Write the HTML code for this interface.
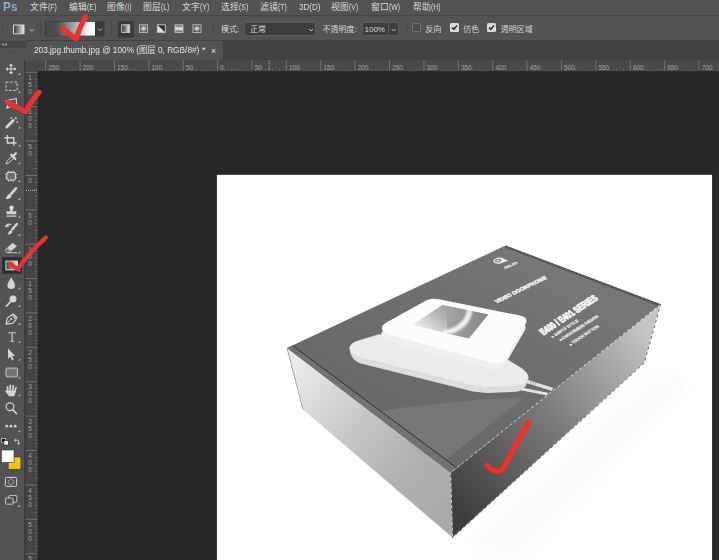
<!DOCTYPE html>
<html lang="zh">
<head>
<meta charset="utf-8">
<title>Photoshop</title>
<style>
html,body{margin:0;padding:0;}
body{width:719px;height:560px;overflow:hidden;background:#282828;position:relative;
 font-family:"Liberation Sans","Noto Sans CJK SC",sans-serif;font-size:9px;color:#dadada;}
.abs{position:absolute;}
#menubar{left:0;top:0;width:719px;height:16px;background:#535353;}
#menubar span{position:absolute;top:0px;line-height:14px;white-space:nowrap;font-size:8.8px;letter-spacing:0.3px;color:#dadada;transform-origin:0 50%;}
#menubar span i{font-style:normal;font-size:8.2px;letter-spacing:0;display:inline-block;transform:scaleX(0.84);transform-origin:0 50%;}
#ps{left:3px;top:-2.2px !important;font-size:13.2px !important;font-weight:bold;color:#86addc !important;letter-spacing:0.2px;line-height:18px !important;transform:scaleX(0.88);}
#optbar{left:0;top:15px;width:719px;height:25px;background:#535353;border-top:1px solid #464646;box-sizing:border-box;}
#optbar .t{position:absolute;top:6.5px;line-height:14px;white-space:nowrap;font-size:8px;color:#d6d6d6;}
#optbar .sep{position:absolute;top:5px;width:1px;height:15px;background:#444;}
#optbar .box{position:absolute;top:5.5px;height:14px;background:#3d3d3d;border:1px solid #5c5c5c;box-sizing:border-box;border-radius:1px;}
#optbar .cb{position:absolute;top:7.2px;width:9px;height:9px;box-sizing:border-box;border-radius:1.5px;}
#tabbar{left:0;top:40px;width:719px;height:21px;background:#424242;}
#tab{left:26px;top:41px;width:197px;height:19px;background:#535353;}
#tabt{transform:scaleX(0.92);}
#tab span{position:absolute;left:7.6px;top:2px;line-height:14px;font-size:9px;color:#e6e6e6;white-space:nowrap;transform-origin:0 50%;}
#tools{left:0;top:40px;width:24.2px;height:520px;background:#535353;}
#toolhead{left:0;top:40.6px;width:25.7px;height:7px;background:#464646;}
#canvas{left:38px;top:71px;width:681px;height:489px;background:#272727;}
svg{position:absolute;left:0;top:0;overflow:visible;}
svg text{font-family:"Liberation Sans","Noto Sans CJK SC",sans-serif;}
</style>
</head>
<body>
<div id="canvas" class="abs"></div>
<svg width="719" height="560" viewBox="0 0 719 560">
<defs>
<linearGradient id="top" gradientUnits="userSpaceOnUse" x1="450" y1="470" x2="560" y2="270"><stop offset="0" stop-color="#686868"/><stop offset="0.5" stop-color="#6d6d6d"/><stop offset="1" stop-color="#777777"/></linearGradient>
<linearGradient id="lf" gradientUnits="userSpaceOnUse" x1="292" y1="375" x2="452" y2="505"><stop offset="0" stop-color="#e9e9e9"/><stop offset="0.42" stop-color="#c5c5c5"/><stop offset="0.7" stop-color="#b1b1b1"/><stop offset="1" stop-color="#aaaaaa"/></linearGradient>
<linearGradient id="rf" gradientUnits="userSpaceOnUse" x1="455" y1="505" x2="655" y2="338.6"><stop offset="0" stop-color="#3f3e3d"/><stop offset="0.5" stop-color="#7c7a7b"/><stop offset="1" stop-color="#c5c5c5"/></linearGradient>
<linearGradient id="scr" gradientUnits="userSpaceOnUse" x1="452" y1="306" x2="428" y2="334"><stop offset="0" stop-color="#9a9a9a"/><stop offset="0.5" stop-color="#bcbcbc"/><stop offset="1" stop-color="#ececec"/></linearGradient>
<linearGradient id="scr2" gradientUnits="userSpaceOnUse" x1="447" y1="320" x2="486" y2="322"><stop offset="0" stop-color="#a4a4a4"/><stop offset="1" stop-color="#868686"/></linearGradient>
<filter id="b2" x="-30%" y="-30%" width="160%" height="160%"><feGaussianBlur stdDeviation="1.3"/></filter>
<filter id="bl" x="-20%" y="-20%" width="140%" height="140%"><feGaussianBlur stdDeviation="9"/></filter>
<filter id="b1"><feGaussianBlur stdDeviation="0.5"/></filter>
</defs>
<rect x="216.4" y="174.3" width="496.2" height="400" fill="#1e1e1e"/>
<rect x="216.9" y="174.8" width="495.2" height="400" fill="#ffffff"/>
<polygon points="470.0,545.0 655.0,375.0 690.0,380.0 520.0,556.0" fill="#fafafa" filter="url(#bl)"/>
<polygon points="287.0,348.0 450.6,472.8 452.6,537.6 303.0,409.5" fill="url(#lf)"/>
<polygon points="450.6,472.8 660.7,304.3 644.2,363.0 452.6,537.6" fill="url(#rf)"/>
<polygon points="287.0,348.0 505.4,245.6 660.7,304.3 450.6,472.8" fill="url(#top)"/>
<path d="M381 411.4 C392 409.4 398 408 404 407.4 L480 399.4 L523.7 397.5 L446.1 459.8 Z" fill="#777777" filter="url(#b1)"/>
<polygon points="287.0,348.0 292.4,345.5 456.8,467.8 450.6,472.8" fill="#727272"/>
<path d="M292.4 345.5 L456.8 467.8" stroke="#262626" stroke-width="0.9"/>
<path d="M287 348 L303 409.5" stroke="#a8a8a8" stroke-width="1"/>
<path d="M505.4 246.6 L659.7 305.1" stroke="#585858" stroke-width="2.2"/>
<g filter="url(#b1)">
<path d="M349.7 349 C350 344.6 353.6 342.4 357 341.2 L379 334.5 L507 359.5 L521 368 C527 372 529.4 377 527.6 381.4 C526 387 522 391 516 391.8 L487 393 L473 391.5 L362 363.8 C355 362 350.4 357 349.7 349 Z" fill="#dedede"/>
<path d="M349.7 348 C350 344.6 353.6 342.4 357 341.2 L379 334.5 L507 359.5 L521 368 C527 372 529.4 376 527.8 379.6 C526 384.4 521 386.4 515 386.6 L487 387.6 L474 386 L364 358.6 C356 356.6 350.4 354 349.7 348 Z" fill="#ebebeb" stroke="#d2d2d2" stroke-width="0.5"/>
<path d="M480 388 L481.6 392.6" stroke="#c8c8c8" stroke-width="0.8"/>
<path transform="translate(-0.9,6.6)" d="M382 329 C381.5 326.5 383 324.5 386 322.8 L426 300.6 C430 298.6 434 298.2 439 299.2 L520 315.6 C526 317 528 320 525.6 324 L505.6 358.6 C502.6 363.4 498.6 364.6 492 362.8 L388.6 334.6 C384.6 333.4 382.6 331.4 382 329 Z" fill="#efefef"/>
<path d="M382 329 C381.5 326.5 383 324.5 386 322.8 L426 300.6 C430 298.6 434 298.2 439 299.2 L520 315.6 C526 317 528 320 525.6 324 L505.6 358.6 C502.6 363.4 498.6 364.6 492 362.8 L388.6 334.6 C384.6 333.4 382.6 331.4 382 329 Z" fill="#fcfcfc"/>
<polygon points="411.9,325.1 442.5,305.1 488.1,314.4 468.9,338.2" fill="url(#scr)"/>
<polygon points="447,306 488.1,314.4 468.9,338.2 447,333.6" fill="url(#scr2)"/>
<clipPath id="scrc"><polygon points="411.9,325.1 442.5,305.1 488.1,314.4 468.9,338.2"/></clipPath>
<g clip-path="url(#scrc)"><path d="M469.4 309 C470 317 464 325 455 329.6 C451 331.6 447 332.6 443 333" fill="none" stroke="#ffffff" stroke-width="5.5" opacity="0.85" filter="url(#b2)"/></g>
</g>
<path d="M526 381.2 L552.6 389.3" stroke="#e2e2e2" stroke-width="3.5"/><path d="M531.4 381 l-1 3.4 M533.6 381.8 l-1 3.4 M535.8 382.4 l-1 3.4" stroke="#a4a4a4" stroke-width="0.8"/>
<path d="M521 388.8 L547.6 394.2" stroke="#e6e6e6" stroke-width="2.8"/>
<g transform="translate(498.6,260.6) rotate(-8)"><path d="M-5.4 0 A5.4 3.1 0 0 1 3.4 -2.4 L9.6 1.6 L2.6 2.7 A5.4 3.1 0 0 1 -5.4 0 Z" fill="#ececec"/><ellipse cx="-0.6" cy="0" rx="3.3" ry="1.8" fill="#8a8a8a"/><ellipse cx="-0.6" cy="0" rx="1.5" ry="0.8" fill="#dcdcdc"/></g>
<text transform="translate(505,269.1) rotate(-22.6) skewX(12)" font-size="3.4" font-weight="bold" fill="#e8e8e8" stroke="#e8e8e8" stroke-width="0.2" textLength="14.3" lengthAdjust="spacingAndGlyphs">SKJD</text>
<text transform="translate(496.4,303.6) rotate(-26.2) skewX(14)" font-size="5.3" font-weight="bold" fill="#f2f2f2" stroke="#f2f2f2" stroke-width="0.45" textLength="56.5" lengthAdjust="spacingAndGlyphs">VIDEO DOORPHONE</text>
<text transform="translate(543.5,335.2) rotate(-33.2) skewX(15)" font-size="9.6" font-weight="bold" fill="#f4f4f4" stroke="#f4f4f4" stroke-width="0.95" textLength="65.8" lengthAdjust="spacingAndGlyphs">E400 / E401 SERIES</text>
<text transform="translate(553.3,337.8) rotate(-32.9) skewX(15)" font-size="4.2" font-weight="bold" fill="#f0f0f0" stroke="#f0f0f0" stroke-width="0.2" textLength="30.4" lengthAdjust="spacingAndGlyphs">▸ SIMPLY STYLE</text>
<text transform="translate(560.8,341.3) rotate(-32.7) skewX(15)" font-size="4.2" font-weight="bold" fill="#f0f0f0" stroke="#f0f0f0" stroke-width="0.2" textLength="45.2" lengthAdjust="spacingAndGlyphs">▸ CHOICENESS DESIGN</text>
<text transform="translate(570.5,345.7) rotate(-33.1) skewX(15)" font-size="4.2" font-weight="bold" fill="#f0f0f0" stroke="#f0f0f0" stroke-width="0.2" textLength="34.4" lengthAdjust="spacingAndGlyphs">▸ TOUCH BUTTON</text>
<path d="M450.6 472.8 L660.7 304.3 L644.2 363 L452.6 537.6 Z" fill="none" stroke="#f4f4f4" stroke-width="0.8" opacity="0.9"/>
<path d="M450.6 472.8 L660.7 304.3 L644.2 363 L452.6 537.6 Z" fill="none" stroke="#2a2a2a" stroke-width="0.8" stroke-dasharray="2.8 2.8" opacity="0.85"/>
</svg>
<div id="menubar" class="abs">
<span id="ps">Ps</span>
<span style="left:30px">文件<i>(F)</i></span>
<span style="left:69px">编辑<i>(E)</i></span>
<span style="left:107px">图像<i>(I)</i></span>
<span style="left:143px">图层<i>(L)</i></span>
<span style="left:182px">文字<i>(Y)</i></span>
<span style="left:221px">选择<i>(S)</i></span>
<span style="left:260px">滤镜<i>(T)</i></span>
<span style="left:299px"><i style="font-size:9.6px">3D(D)</i></span>
<span style="left:331px">视图<i>(V)</i></span>
<span style="left:371px">窗口<i>(W)</i></span>
<span style="left:413px">帮助<i>(H)</i></span>
</div>
<div id="optbar" class="abs">
<svg width="719" height="25" viewBox="0 15 719 25"><rect x="2" y="22" width="1" height="1" fill="#414141"/><rect x="2" y="24" width="1" height="1" fill="#414141"/><rect x="2" y="26" width="1" height="1" fill="#414141"/><rect x="2" y="28" width="1" height="1" fill="#414141"/><rect x="2" y="30" width="1" height="1" fill="#414141"/><rect x="2" y="32" width="1" height="1" fill="#414141"/><rect x="2" y="34" width="1" height="1" fill="#414141"/><defs><linearGradient id="g1" x1="0" x2="1" y1="0" y2="0"><stop offset="0" stop-color="#2e2e2e"/><stop offset="1" stop-color="#e8e8e8"/></linearGradient><linearGradient id="g2" x1="0" x2="1" y1="0" y2="0"><stop offset="0" stop-color="#4a4a4a"/><stop offset="0.25" stop-color="#505050"/><stop offset="0.85" stop-color="#f4f4f4"/><stop offset="1" stop-color="#ffffff"/></linearGradient><radialGradient id="g3"><stop offset="0" stop-color="#f0f0f0"/><stop offset="1" stop-color="#505050"/></radialGradient><linearGradient id="g4" x1="0" x2="0" y1="0" y2="1"><stop offset="0" stop-color="#555"/><stop offset="0.5" stop-color="#f0f0f0"/><stop offset="1" stop-color="#555"/></linearGradient></defs><rect x="13.5" y="24" width="10.5" height="8.8" fill="url(#g1)" stroke="#d8d8d8" stroke-width="1"/><path d="M30 28.2 L32 30.2 L34 28.2" fill="none" stroke="#bdbdbd" stroke-width="1"/><rect x="40" y="20" width="1" height="15" fill="#484848"/><rect x="45" y="20.2" width="59.5" height="15" fill="#3a3a3a" rx="1"/><rect x="46" y="20.9" width="49" height="13.7" fill="url(#g2)"/><path d="M98 27.6 L100 29.6 L102 27.6" fill="none" stroke="#c8c8c8" stroke-width="1"/><rect x="111" y="20" width="1" height="15" fill="#484848"/><rect x="118" y="20" width="16" height="16.5" fill="#3a3a3a" rx="1"/><rect x="121.7" y="23.8" width="8" height="7.6" fill="url(#g1)" stroke="#cccccc" stroke-width="0.9"/><rect x="139.5" y="23.8" width="8" height="7.6" fill="url(#g3)" stroke="#c4c4c4" stroke-width="0.9"/><rect x="157.3" y="23.8" width="8" height="7.6" fill="#dedede"/><path d="M157.3 23.8 L165.3 23.8 L165.3 31.4 Z" fill="#2c2c2c"/><rect x="157.3" y="23.8" width="8" height="7.6" fill="none" stroke="#c4c4c4" stroke-width="0.9"/><rect x="175" y="23.8" width="8" height="7.6" fill="url(#g4)" stroke="#c4c4c4" stroke-width="0.9"/><rect x="193" y="23.8" width="8" height="7.6" fill="#4a4a4a"/><path d="M197 23.8 L201 27.6 L197 31.4 L193 27.6 Z" fill="url(#g3)"/><rect x="193" y="23.8" width="8" height="7.6" fill="none" stroke="#c4c4c4" stroke-width="0.9"/><rect x="213" y="20" width="1" height="15" fill="#484848"/><rect x="406" y="20" width="1" height="15" fill="#484848"/></svg>
<span class="t" style="left:221px">模式:</span>
<div class="box" style="left:244px;width:72px"></div>
<span class="t" style="left:250px">正常</span>
<span class="t" style="left:322.5px">不透明度:</span>
<div class="box" style="left:362px;width:27px"></div>
<div class="box" style="left:388px;width:11px"></div>
<span class="t" style="left:364.5px">100%</span>
<svg width="719" height="25" viewBox="0 15 719 25"><path d="M309 28 L311 30 L313 28" fill="none" stroke="#c0c0c0" stroke-width="1"/><path d="M391.5 28 L393.5 30 L395.5 28" fill="none" stroke="#c0c0c0" stroke-width="1"/></svg>
<div class="cb" style="left:412px;background:#4a4a4a;border:1px solid #727272"></div>
<span class="t" style="left:425.5px">反向</span>
<div class="cb" style="left:449.5px;background:#dcdcdc"><svg width="9" height="9" viewBox="0 0 9 9" style="left:0;top:0"><path d="M2 4.4 L3.8 6.3 L7 2.4" fill="none" stroke="#2a2a2a" stroke-width="1.5"/></svg></div>
<span class="t" style="left:463.3px">仿色</span>
<div class="cb" style="left:487.3px;background:#dcdcdc"><svg width="9" height="9" viewBox="0 0 9 9" style="left:0;top:0"><path d="M2 4.4 L3.8 6.3 L7 2.4" fill="none" stroke="#2a2a2a" stroke-width="1.5"/></svg></div>
<span class="t" style="left:500.8px">透明区域</span>
</div>
<div id="tabbar" class="abs"></div>
<div id="tab" class="abs"><span id="tabt">203.jpg.thumb.jpg @ 100% (图层 0, RGB/8#)</span><span style="left:176px">*</span><span style="left:185px;font-size:8.6px;top:2.6px">×</span></div>
<svg width="719" height="560" viewBox="0 0 719 560">
<rect x="26" y="60" width="693" height="11" fill="#494949"/>
<rect x="24" y="60" width="2" height="500" fill="#3d3d3d"/>
<rect x="25.7" y="71" width="12" height="489" fill="#454545"/>
<path d="M38.80 68.4V71 M42.24 69.6V71 M49.11 69.6V71 M52.55 68.4V71 M55.99 69.6V71 M59.43 68.4V71 M62.87 69.6V71 M66.31 68.4V71 M69.74 69.6V71 M73.18 68.4V71 M76.62 69.6V71 M83.50 69.6V71 M86.94 68.4V71 M90.38 69.6V71 M93.81 68.4V71 M97.25 69.6V71 M100.69 68.4V71 M104.13 69.6V71 M107.57 68.4V71 M111.01 69.6V71 M117.88 69.6V71 M121.32 68.4V71 M124.76 69.6V71 M128.20 68.4V71 M131.64 69.6V71 M135.08 68.4V71 M138.51 69.6V71 M141.95 68.4V71 M145.39 69.6V71 M152.27 69.6V71 M155.71 68.4V71 M159.15 69.6V71 M162.58 68.4V71 M166.02 69.6V71 M169.46 68.4V71 M172.90 69.6V71 M176.34 68.4V71 M179.78 69.6V71 M186.65 69.6V71 M190.09 68.4V71 M193.53 69.6V71 M196.97 68.4V71 M200.41 69.6V71 M203.85 68.4V71 M207.28 69.6V71 M210.72 68.4V71 M214.16 69.6V71 M221.04 69.6V71 M224.48 68.4V71 M227.92 69.6V71 M231.35 68.4V71 M234.79 69.6V71 M238.23 68.4V71 M241.67 69.6V71 M245.11 68.4V71 M248.55 69.6V71 M255.42 69.6V71 M258.86 68.4V71 M262.30 69.6V71 M265.74 68.4V71 M269.18 69.6V71 M272.62 68.4V71 M276.05 69.6V71 M279.49 68.4V71 M282.93 69.6V71 M289.81 69.6V71 M293.25 68.4V71 M296.69 69.6V71 M300.12 68.4V71 M303.56 69.6V71 M307.00 68.4V71 M310.44 69.6V71 M313.88 68.4V71 M317.32 69.6V71 M324.19 69.6V71 M327.63 68.4V71 M331.07 69.6V71 M334.51 68.4V71 M337.95 69.6V71 M341.39 68.4V71 M344.82 69.6V71 M348.26 68.4V71 M351.70 69.6V71 M358.58 69.6V71 M362.02 68.4V71 M365.46 69.6V71 M368.89 68.4V71 M372.33 69.6V71 M375.77 68.4V71 M379.21 69.6V71 M382.65 68.4V71 M386.09 69.6V71 M392.96 69.6V71 M396.40 68.4V71 M399.84 69.6V71 M403.28 68.4V71 M406.72 69.6V71 M410.16 68.4V71 M413.59 69.6V71 M417.03 68.4V71 M420.47 69.6V71 M427.35 69.6V71 M430.79 68.4V71 M434.23 69.6V71 M437.66 68.4V71 M441.10 69.6V71 M444.54 68.4V71 M447.98 69.6V71 M451.42 68.4V71 M454.86 69.6V71 M461.73 69.6V71 M465.17 68.4V71 M468.61 69.6V71 M472.05 68.4V71 M475.49 69.6V71 M478.93 68.4V71 M482.36 69.6V71 M485.80 68.4V71 M489.24 69.6V71 M496.12 69.6V71 M499.56 68.4V71 M503.00 69.6V71 M506.43 68.4V71 M509.87 69.6V71 M513.31 68.4V71 M516.75 69.6V71 M520.19 68.4V71 M523.63 69.6V71 M530.50 69.6V71 M533.94 68.4V71 M537.38 69.6V71 M540.82 68.4V71 M544.26 69.6V71 M547.70 68.4V71 M551.13 69.6V71 M554.57 68.4V71 M558.01 69.6V71 M564.89 69.6V71 M568.33 68.4V71 M571.77 69.6V71 M575.20 68.4V71 M578.64 69.6V71 M582.08 68.4V71 M585.52 69.6V71 M588.96 68.4V71 M592.40 69.6V71 M599.27 69.6V71 M602.71 68.4V71 M606.15 69.6V71 M609.59 68.4V71 M613.03 69.6V71 M616.47 68.4V71 M619.90 69.6V71 M623.34 68.4V71 M626.78 69.6V71 M633.66 69.6V71 M637.10 68.4V71 M640.54 69.6V71 M643.97 68.4V71 M647.41 69.6V71 M650.85 68.4V71 M654.29 69.6V71 M657.73 68.4V71 M661.17 69.6V71 M668.04 69.6V71 M671.48 68.4V71 M674.92 69.6V71 M678.36 68.4V71 M681.80 69.6V71 M685.24 68.4V71 M688.67 69.6V71 M692.11 68.4V71 M695.55 69.6V71 M702.43 69.6V71 M705.87 68.4V71 M709.31 69.6V71 M712.74 68.4V71 M716.18 69.6V71" stroke="#6c6c6c" stroke-width="0.8" fill="none"/>
<path d="M45.68 60.5V71 M80.06 60.5V71 M114.44 60.5V71 M148.83 60.5V71 M183.22 60.5V71 M217.60 60.5V71 M251.98 60.5V71 M286.37 60.5V71 M320.75 60.5V71 M355.14 60.5V71 M389.52 60.5V71 M423.91 60.5V71 M458.29 60.5V71 M492.68 60.5V71 M527.06 60.5V71 M561.45 60.5V71 M595.84 60.5V71 M630.22 60.5V71 M664.61 60.5V71 M698.99 60.5V71" stroke="#7e7e7e" stroke-width="0.8" fill="none"/>
<text x="48.4" y="69.7" font-size="7.6" fill="#a6a6a6" textLength="10.6" lengthAdjust="spacingAndGlyphs">250</text>
<text x="82.8" y="69.7" font-size="7.6" fill="#a6a6a6" textLength="10.6" lengthAdjust="spacingAndGlyphs">200</text>
<text x="117.1" y="69.7" font-size="7.6" fill="#a6a6a6" textLength="10.6" lengthAdjust="spacingAndGlyphs">150</text>
<text x="151.5" y="69.7" font-size="7.6" fill="#a6a6a6" textLength="10.6" lengthAdjust="spacingAndGlyphs">100</text>
<text x="185.9" y="69.7" font-size="7.6" fill="#a6a6a6" textLength="7.1" lengthAdjust="spacingAndGlyphs">50</text>
<text x="220.3" y="69.7" font-size="7.6" fill="#a6a6a6" textLength="3.5" lengthAdjust="spacingAndGlyphs">0</text>
<text x="254.7" y="69.7" font-size="7.6" fill="#a6a6a6" textLength="7.1" lengthAdjust="spacingAndGlyphs">50</text>
<text x="289.1" y="69.7" font-size="7.6" fill="#a6a6a6" textLength="10.6" lengthAdjust="spacingAndGlyphs">100</text>
<text x="323.5" y="69.7" font-size="7.6" fill="#a6a6a6" textLength="10.6" lengthAdjust="spacingAndGlyphs">150</text>
<text x="357.8" y="69.7" font-size="7.6" fill="#a6a6a6" textLength="10.6" lengthAdjust="spacingAndGlyphs">200</text>
<text x="392.2" y="69.7" font-size="7.6" fill="#a6a6a6" textLength="10.6" lengthAdjust="spacingAndGlyphs">250</text>
<text x="426.6" y="69.7" font-size="7.6" fill="#a6a6a6" textLength="10.6" lengthAdjust="spacingAndGlyphs">300</text>
<text x="461.0" y="69.7" font-size="7.6" fill="#a6a6a6" textLength="10.6" lengthAdjust="spacingAndGlyphs">350</text>
<text x="495.4" y="69.7" font-size="7.6" fill="#a6a6a6" textLength="10.6" lengthAdjust="spacingAndGlyphs">400</text>
<text x="529.8" y="69.7" font-size="7.6" fill="#a6a6a6" textLength="10.6" lengthAdjust="spacingAndGlyphs">450</text>
<text x="564.1" y="69.7" font-size="7.6" fill="#a6a6a6" textLength="10.6" lengthAdjust="spacingAndGlyphs">500</text>
<text x="598.5" y="69.7" font-size="7.6" fill="#a6a6a6" textLength="10.6" lengthAdjust="spacingAndGlyphs">550</text>
<text x="632.9" y="69.7" font-size="7.6" fill="#a6a6a6" textLength="10.6" lengthAdjust="spacingAndGlyphs">600</text>
<text x="667.3" y="69.7" font-size="7.6" fill="#a6a6a6" textLength="10.6" lengthAdjust="spacingAndGlyphs">650</text>
<text x="701.7" y="69.7" font-size="7.6" fill="#a6a6a6" textLength="10.6" lengthAdjust="spacingAndGlyphs">700</text>
<path d="M35.8 75.68H37.6 M34 79.12H37.6 M35.8 82.56H37.6 M34 86.00H37.6 M35.8 89.44H37.6 M34 92.88H37.6 M35.8 96.31H37.6 M34 99.75H37.6 M35.8 103.19H37.6 M35.8 110.07H37.6 M34 113.51H37.6 M35.8 116.95H37.6 M34 120.38H37.6 M35.8 123.82H37.6 M34 127.26H37.6 M35.8 130.70H37.6 M34 134.14H37.6 M35.8 137.58H37.6 M35.8 144.45H37.6 M34 147.89H37.6 M35.8 151.33H37.6 M34 154.77H37.6 M35.8 158.21H37.6 M34 161.65H37.6 M35.8 165.08H37.6 M34 168.52H37.6 M35.8 171.96H37.6 M35.8 178.84H37.6 M34 182.28H37.6 M35.8 185.72H37.6 M34 189.15H37.6 M35.8 192.59H37.6 M34 196.03H37.6 M35.8 199.47H37.6 M34 202.91H37.6 M35.8 206.35H37.6 M35.8 213.22H37.6 M34 216.66H37.6 M35.8 220.10H37.6 M34 223.54H37.6 M35.8 226.98H37.6 M34 230.42H37.6 M35.8 233.85H37.6 M34 237.29H37.6 M35.8 240.73H37.6 M35.8 247.61H37.6 M34 251.05H37.6 M35.8 254.49H37.6 M34 257.92H37.6 M35.8 261.36H37.6 M34 264.80H37.6 M35.8 268.24H37.6 M34 271.68H37.6 M35.8 275.12H37.6 M35.8 281.99H37.6 M34 285.43H37.6 M35.8 288.87H37.6 M34 292.31H37.6 M35.8 295.75H37.6 M34 299.19H37.6 M35.8 302.62H37.6 M34 306.06H37.6 M35.8 309.50H37.6 M35.8 316.38H37.6 M34 319.82H37.6 M35.8 323.26H37.6 M34 326.69H37.6 M35.8 330.13H37.6 M34 333.57H37.6 M35.8 337.01H37.6 M34 340.45H37.6 M35.8 343.89H37.6 M35.8 350.76H37.6 M34 354.20H37.6 M35.8 357.64H37.6 M34 361.08H37.6 M35.8 364.52H37.6 M34 367.96H37.6 M35.8 371.39H37.6 M34 374.83H37.6 M35.8 378.27H37.6 M35.8 385.15H37.6 M34 388.59H37.6 M35.8 392.03H37.6 M34 395.46H37.6 M35.8 398.90H37.6 M34 402.34H37.6 M35.8 405.78H37.6 M34 409.22H37.6 M35.8 412.66H37.6 M35.8 419.53H37.6 M34 422.97H37.6 M35.8 426.41H37.6 M34 429.85H37.6 M35.8 433.29H37.6 M34 436.73H37.6 M35.8 440.16H37.6 M34 443.60H37.6 M35.8 447.04H37.6 M35.8 453.92H37.6 M34 457.36H37.6 M35.8 460.80H37.6 M34 464.23H37.6 M35.8 467.67H37.6 M34 471.11H37.6 M35.8 474.55H37.6 M34 477.99H37.6 M35.8 481.43H37.6 M35.8 488.30H37.6 M34 491.74H37.6 M35.8 495.18H37.6 M34 498.62H37.6 M35.8 502.06H37.6 M34 505.50H37.6 M35.8 508.93H37.6 M34 512.37H37.6 M35.8 515.81H37.6 M35.8 522.69H37.6 M34 526.13H37.6 M35.8 529.57H37.6 M34 533.00H37.6 M35.8 536.44H37.6 M34 539.88H37.6 M35.8 543.32H37.6 M34 546.76H37.6 M35.8 550.20H37.6 M35.8 557.07H37.6" stroke="#6c6c6c" stroke-width="0.8" fill="none"/>
<path d="M25.7 72.25H37.6 M25.7 106.63H37.6 M25.7 141.02H37.6 M25.7 175.40H37.6 M25.7 209.78H37.6 M25.7 244.17H37.6 M25.7 278.56H37.6 M25.7 312.94H37.6 M25.7 347.32H37.6 M25.7 381.71H37.6 M25.7 416.10H37.6 M25.7 450.48H37.6 M25.7 484.87H37.6 M25.7 519.25H37.6 M25.7 553.63H37.6" stroke="#7e7e7e" stroke-width="0.8" fill="none"/>
<text x="28.2" y="79.9" font-size="7.7" fill="#a6a6a6" textLength="3.5" lengthAdjust="spacingAndGlyphs">1</text>
<text x="28.2" y="86.9" font-size="7.7" fill="#a6a6a6" textLength="3.5" lengthAdjust="spacingAndGlyphs">5</text>
<text x="28.2" y="93.9" font-size="7.7" fill="#a6a6a6" textLength="3.5" lengthAdjust="spacingAndGlyphs">0</text>
<text x="28.2" y="114.3" font-size="7.7" fill="#a6a6a6" textLength="3.5" lengthAdjust="spacingAndGlyphs">1</text>
<text x="28.2" y="121.3" font-size="7.7" fill="#a6a6a6" textLength="3.5" lengthAdjust="spacingAndGlyphs">0</text>
<text x="28.2" y="128.3" font-size="7.7" fill="#a6a6a6" textLength="3.5" lengthAdjust="spacingAndGlyphs">0</text>
<text x="28.2" y="148.7" font-size="7.7" fill="#a6a6a6" textLength="3.5" lengthAdjust="spacingAndGlyphs">5</text>
<text x="28.2" y="155.7" font-size="7.7" fill="#a6a6a6" textLength="3.5" lengthAdjust="spacingAndGlyphs">0</text>
<text x="28.2" y="183.1" font-size="7.7" fill="#a6a6a6" textLength="3.5" lengthAdjust="spacingAndGlyphs">0</text>
<text x="28.2" y="217.5" font-size="7.7" fill="#a6a6a6" textLength="3.5" lengthAdjust="spacingAndGlyphs">5</text>
<text x="28.2" y="224.5" font-size="7.7" fill="#a6a6a6" textLength="3.5" lengthAdjust="spacingAndGlyphs">0</text>
<text x="28.2" y="251.9" font-size="7.7" fill="#a6a6a6" textLength="3.5" lengthAdjust="spacingAndGlyphs">1</text>
<text x="28.2" y="258.9" font-size="7.7" fill="#a6a6a6" textLength="3.5" lengthAdjust="spacingAndGlyphs">0</text>
<text x="28.2" y="265.9" font-size="7.7" fill="#a6a6a6" textLength="3.5" lengthAdjust="spacingAndGlyphs">0</text>
<text x="28.2" y="286.3" font-size="7.7" fill="#a6a6a6" textLength="3.5" lengthAdjust="spacingAndGlyphs">1</text>
<text x="28.2" y="293.3" font-size="7.7" fill="#a6a6a6" textLength="3.5" lengthAdjust="spacingAndGlyphs">5</text>
<text x="28.2" y="300.3" font-size="7.7" fill="#a6a6a6" textLength="3.5" lengthAdjust="spacingAndGlyphs">0</text>
<text x="28.2" y="320.6" font-size="7.7" fill="#a6a6a6" textLength="3.5" lengthAdjust="spacingAndGlyphs">2</text>
<text x="28.2" y="327.6" font-size="7.7" fill="#a6a6a6" textLength="3.5" lengthAdjust="spacingAndGlyphs">0</text>
<text x="28.2" y="334.6" font-size="7.7" fill="#a6a6a6" textLength="3.5" lengthAdjust="spacingAndGlyphs">0</text>
<text x="28.2" y="355.0" font-size="7.7" fill="#a6a6a6" textLength="3.5" lengthAdjust="spacingAndGlyphs">2</text>
<text x="28.2" y="362.0" font-size="7.7" fill="#a6a6a6" textLength="3.5" lengthAdjust="spacingAndGlyphs">5</text>
<text x="28.2" y="369.0" font-size="7.7" fill="#a6a6a6" textLength="3.5" lengthAdjust="spacingAndGlyphs">0</text>
<text x="28.2" y="389.4" font-size="7.7" fill="#a6a6a6" textLength="3.5" lengthAdjust="spacingAndGlyphs">3</text>
<text x="28.2" y="396.4" font-size="7.7" fill="#a6a6a6" textLength="3.5" lengthAdjust="spacingAndGlyphs">0</text>
<text x="28.2" y="403.4" font-size="7.7" fill="#a6a6a6" textLength="3.5" lengthAdjust="spacingAndGlyphs">0</text>
<text x="28.2" y="423.8" font-size="7.7" fill="#a6a6a6" textLength="3.5" lengthAdjust="spacingAndGlyphs">3</text>
<text x="28.2" y="430.8" font-size="7.7" fill="#a6a6a6" textLength="3.5" lengthAdjust="spacingAndGlyphs">5</text>
<text x="28.2" y="437.8" font-size="7.7" fill="#a6a6a6" textLength="3.5" lengthAdjust="spacingAndGlyphs">0</text>
<text x="28.2" y="458.2" font-size="7.7" fill="#a6a6a6" textLength="3.5" lengthAdjust="spacingAndGlyphs">4</text>
<text x="28.2" y="465.2" font-size="7.7" fill="#a6a6a6" textLength="3.5" lengthAdjust="spacingAndGlyphs">0</text>
<text x="28.2" y="472.2" font-size="7.7" fill="#a6a6a6" textLength="3.5" lengthAdjust="spacingAndGlyphs">0</text>
<text x="28.2" y="492.6" font-size="7.7" fill="#a6a6a6" textLength="3.5" lengthAdjust="spacingAndGlyphs">4</text>
<text x="28.2" y="499.6" font-size="7.7" fill="#a6a6a6" textLength="3.5" lengthAdjust="spacingAndGlyphs">5</text>
<text x="28.2" y="506.6" font-size="7.7" fill="#a6a6a6" textLength="3.5" lengthAdjust="spacingAndGlyphs">0</text>
<text x="28.2" y="527.0" font-size="7.7" fill="#a6a6a6" textLength="3.5" lengthAdjust="spacingAndGlyphs">5</text>
<text x="28.2" y="534.0" font-size="7.7" fill="#a6a6a6" textLength="3.5" lengthAdjust="spacingAndGlyphs">0</text>
<text x="28.2" y="541.0" font-size="7.7" fill="#a6a6a6" textLength="3.5" lengthAdjust="spacingAndGlyphs">0</text>
<text x="28.2" y="561.3" font-size="7.7" fill="#a6a6a6" textLength="3.5" lengthAdjust="spacingAndGlyphs">5</text>
<text x="28.2" y="568.3" font-size="7.7" fill="#a6a6a6" textLength="3.5" lengthAdjust="spacingAndGlyphs">5</text>
<text x="28.2" y="575.3" font-size="7.7" fill="#a6a6a6" textLength="3.5" lengthAdjust="spacingAndGlyphs">0</text>
<rect x="26" y="60.6" width="11.4" height="10.2" fill="#494949" stroke="#5c5c5c" stroke-width="0.6"/>
<path d="M26 71H719 M37.6 60V560" stroke="#3a3a3a" stroke-width="0.6" fill="none"/>
<path d="M269.2 61V71 M26 190.4H37.6" stroke="#c8c8c8" stroke-width="0.9" stroke-dasharray="1 1" fill="none"/>
</svg>
<div id="tools" class="abs"></div>
<div class="abs" style="left:0;top:40px;width:25.7px;height:20px;background:#535353"></div>
<div id="toolhead" class="abs"></div>
<svg width="40" height="560" viewBox="0 0 40 560">
<path d="M2.5 43 L4.2 44.5 L2.5 46 Z M5.5 43 L7.2 44.5 L5.5 46 Z" fill="#c8c8c8"/>
<rect x="7" y="52" width="1" height="1" fill="#444"/><rect x="9" y="52" width="1" height="1" fill="#444"/><rect x="11" y="52" width="1" height="1" fill="#444"/><rect x="13" y="52" width="1" height="1" fill="#444"/><rect x="15" y="52" width="1" height="1" fill="#444"/><rect x="17" y="52" width="1" height="1" fill="#444"/>
<rect x="2" y="257.35" width="20" height="16.5" rx="1.5" fill="#2f2f2f"/>
<path d="M20.2 72.8 L20.2 75.0 L18 75.0 Z" fill="#bdbdbd"/>
<path d="M20.2 90.64999999999999 L20.2 92.85 L18 92.85 Z" fill="#bdbdbd"/>
<path d="M20.2 108.5 L20.2 110.7 L18 110.7 Z" fill="#bdbdbd"/>
<path d="M20.2 126.35 L20.2 128.54999999999998 L18 128.54999999999998 Z" fill="#bdbdbd"/>
<path d="M20.2 144.20000000000002 L20.2 146.4 L18 146.4 Z" fill="#bdbdbd"/>
<path d="M20.2 162.05 L20.2 164.25 L18 164.25 Z" fill="#bdbdbd"/>
<path d="M20.2 179.9 L20.2 182.1 L18 182.1 Z" fill="#bdbdbd"/>
<path d="M20.2 197.75 L20.2 199.95 L18 199.95 Z" fill="#bdbdbd"/>
<path d="M20.2 215.60000000000002 L20.2 217.8 L18 217.8 Z" fill="#bdbdbd"/>
<path d="M20.2 233.45000000000002 L20.2 235.65 L18 235.65 Z" fill="#bdbdbd"/>
<path d="M20.2 251.3 L20.2 253.5 L18 253.5 Z" fill="#bdbdbd"/>
<path d="M20.2 269.15000000000003 L20.2 271.35 L18 271.35 Z" fill="#bdbdbd"/>
<path d="M20.2 287.0 L20.2 289.2 L18 289.2 Z" fill="#bdbdbd"/>
<path d="M20.2 304.85 L20.2 307.05 L18 307.05 Z" fill="#bdbdbd"/>
<path d="M20.2 322.7 L20.2 324.9 L18 324.9 Z" fill="#bdbdbd"/>
<path d="M20.2 340.55 L20.2 342.75 L18 342.75 Z" fill="#bdbdbd"/>
<path d="M20.2 358.40000000000003 L20.2 360.6 L18 360.6 Z" fill="#bdbdbd"/>
<path d="M20.2 376.25 L20.2 378.45 L18 378.45 Z" fill="#bdbdbd"/>
<path d="M20.2 394.1 L20.2 396.3 L18 396.3 Z" fill="#bdbdbd"/>
<path d="M20.2 429.8 L20.2 432.0 L18 432.0 Z" fill="#bdbdbd"/>
<path d="M11 63.6 L13.1 65.9 H11.55 V68.45 H14.1 V66.9 L16.4 69.0 L14.1 71.1 V69.55 H11.55 V72.1 H13.1 L11 74.4 L8.9 72.1 H10.45 V69.55 H7.9 V71.1 L5.6 69.0 L7.9 66.9 V68.45 H10.45 V65.9 H8.9 Z" fill="#d4d4d4"/>
<rect x="6" y="82.14999999999999" width="11.2" height="8.3" fill="none" stroke="#d0d0d0" stroke-width="1" stroke-dasharray="2.6 1.6"/>
<path d="M5.8 100.7 L16.4 98.5 L16.4 105.10000000000001 L9 103.3 Z M9 103.3 L6.4 107.9 L10 107.10000000000001" fill="none" stroke="#d4d4d4" stroke-width="1.1" stroke-linejoin="round"/>
<path d="M6.8 126.95 L13.2 120.55" stroke="#d4d4d4" stroke-width="2.8" stroke-linecap="round"/><path d="M15.8 116.95v2.4M14.6 118.14999999999999h2.4 M17.2 121.35v1.6M16.4 122.14999999999999h1.6 M11.3 117.14999999999999v1.6M10.5 117.95h1.6" stroke="#d4d4d4" stroke-width="0.9"/>
<path d="M7.4 135.0 V143.0 H16.6 M4.4 137.8 H13.8 V145.8" fill="none" stroke="#d4d4d4" stroke-width="1.4"/>
<path d="M6 163.75 L7 161.25 L12 156.25 L13.8 158.05 L8.8 163.05 Z" fill="none" stroke="#d4d4d4" stroke-width="1"/><path d="M11.3 154.95 L15.2 158.85 M12.8 156.45 L15.8 153.45" stroke="#d4d4d4" stroke-width="2.4" stroke-linecap="round"/>
<rect x="6.8" y="172.4" width="8.6" height="7.6" rx="1.4" fill="#6a6a6a" stroke="#d4d4d4" stroke-width="1.1"/><path d="M8.6 170.7v1.7 M11.1 170.7v1.7 M13.6 170.7v1.7 M8.6 180.0v1.7 M11.1 180.0v1.7 M13.6 180.0v1.7 M5.1 174.5h1.7 M5.1 177.7h1.7 M15.4 174.5h1.7 M15.4 177.7h1.7" stroke="#d4d4d4" stroke-width="0.9"/>
<path d="M16 188.35 L11.2 193.75" stroke="#d4d4d4" stroke-width="2.7" stroke-linecap="round"/><path d="M10.2 194.14999999999998 C7.8 193.75 7.2 196.75 5.4 198.75 C8.6 199.54999999999998 11.6 198.14999999999998 11.4 195.54999999999998 Z" fill="#d4d4d4"/>
<path d="M9.3 207.60000000000002 a2.2 2.2 0 1 1 4.4 0 c0 1.6 -1 1.8 -0.9 3.6 H16.3 V214.20000000000002 H6.5 V211.20000000000002 H10.2 c0.1 -1.8 -0.9 -2 -0.9 -3.6 Z M6.5 215.4 H16.3 V216.8 H6.5 Z" fill="#d4d4d4"/>
<path d="M16.8 224.05 L12.4 229.25" stroke="#d4d4d4" stroke-width="2.5" stroke-linecap="round"/><path d="M11.2 230.05 C9.4 229.85 9.2 232.25 7.4 234.45000000000002 C10.2 234.85 12.4 233.25 12.3 231.25 Z" fill="#d4d4d4"/><path d="M5 226.45000000000002 h3.2 v-2.2 M5.4 226.65 a4.4 4.4 0 0 1 6 -2" fill="none" stroke="#d4d4d4" stroke-width="1.1"/>
<path d="M12.6 242.9 L17 246.1 L11.4 251.1 L7 247.9 Z" fill="#d4d4d4"/><path d="M6.4 248.5 L10.6 251.7 L9.8 252.4 H7 L5.2 250.7 Z" fill="none" stroke="#d4d4d4" stroke-width="0.9"/><path d="M7 252.7 H17" stroke="#d4d4d4" stroke-width="0.9"/>
<defs><linearGradient id="tg" x1="0" x2="1"><stop offset="0" stop-color="#3a3a3a"/><stop offset="1" stop-color="#e6e6e6"/></linearGradient></defs><rect x="6" y="261.15000000000003" width="11.5" height="8.6" fill="url(#tg)" stroke="#d4d4d4" stroke-width="1.1"/>
<path d="M11.2 277.2 C12.6 280.59999999999997 15 282.59999999999997 15 285.2 A3.8 3.8 0 0 1 7.4 285.2 C7.4 282.59999999999997 9.8 280.59999999999997 11.2 277.2 Z" fill="#d4d4d4"/>
<circle cx="13" cy="299.05" r="3.5" fill="#d4d4d4"/><path d="M10.4 301.85 L6.4 306.05" stroke="#d4d4d4" stroke-width="1.7" stroke-linecap="round"/>
<path d="M6 324.09999999999997 L7.2 318.29999999999995 L11.6 314.9 L16.2 319.29999999999995 L12.6 323.29999999999995 Z" fill="none" stroke="#d4d4d4" stroke-width="1.2" stroke-linejoin="round"/><path d="M6.2 323.9 L10.6 319.7" stroke="#d4d4d4" stroke-width="0.9"/><circle cx="11.2" cy="319.09999999999997" r="1.1" fill="#d4d4d4"/><path d="M12.6 313.5 L17.4 318.09999999999997" stroke="#d4d4d4" stroke-width="1.5"/>
<text x="8.6" y="341.65" font-size="13.6" fill="#d4d4d4" textLength="7.2" lengthAdjust="spacingAndGlyphs" style="font-family:'Liberation Serif',serif">T</text>
<path d="M8 348.6 L15.2 356.0 H12 L13.8 359.8 L12 360.6 L10.2 356.8 L8 359.0 Z" fill="#d4d4d4"/>
<rect x="6" y="368.05" width="11.5" height="8.8" rx="1" fill="#727272" stroke="#c6c6c6" stroke-width="1"/>
<path d="M9 396.3 C8 394.3 5.6 392.7 5.2 391.1 C5.4 389.90000000000003 6.8 390.1 8 391.5 Z" fill="#d4d4d4"/><path d="M8 392.3 L7.4 386.90000000000003 M10.2 391.3 L10.2 385.3 M12.6 391.3 L13.2 385.7 M14.6 392.3 L16 387.7" stroke="#d4d4d4" stroke-width="1.7" stroke-linecap="round" fill="none"/><path d="M7.4 390.7 H15.4 C15.6 393.3 14.8 394.90000000000003 14.2 396.3 H9 C8.4 394.7 7.6 392.90000000000003 7.4 390.7 Z" fill="#d4d4d4"/>
<circle cx="10" cy="406.75" r="3.9" fill="none" stroke="#d4d4d4" stroke-width="1.2"/><path d="M12.8 409.75 L16.4 413.54999999999995" stroke="#d4d4d4" stroke-width="1.6" stroke-linecap="round"/>
<circle cx="6.8" cy="426.2" r="1.35" fill="#d4d4d4"/><circle cx="11" cy="426.2" r="1.35" fill="#d4d4d4"/><circle cx="15.2" cy="426.2" r="1.35" fill="#d4d4d4"/>
<rect x="1.6" y="438.4" width="4.2" height="4.2" fill="#111" stroke="#ddd" stroke-width="0.7"/><rect x="4" y="440.8" width="4.2" height="4.2" fill="#fff" stroke="#111" stroke-width="0.5"/>
<path d="M14 440.2 h4.6 v4.2 M14.2 440.2 l1.6 -1.5 M14.2 440.2 l1.6 1.5 M18.6 444.4 l-1.5 -1.6 M18.6 444.4 l1.5 -1.6" fill="none" stroke="#d4d4d4" stroke-width="0.9"/>
<rect x="8.2" y="457" width="12.7" height="12.2" fill="#f2c811" stroke="#3a3a3a" stroke-width="0.6"/>
<rect x="1.5" y="450" width="12.5" height="12.4" fill="#ffffff" stroke="#3a3a3a" stroke-width="0.6"/>
<rect x="5.4" y="477.4" width="11.2" height="9" rx="1" fill="none" stroke="#d4d4d4" stroke-width="1"/><circle cx="11" cy="481.9" r="2.7" fill="none" stroke="#d4d4d4" stroke-width="0.9" stroke-dasharray="1.4 0.9"/>
<rect x="8.8" y="495.6" width="8" height="6.6" rx="0.8" fill="#454545" stroke="#d4d4d4" stroke-width="0.9"/><rect x="5.5" y="498" width="7.6" height="6.2" rx="0.8" fill="#535353" stroke="#d4d4d4" stroke-width="0.9"/>
<path d="M19.8 504.6 L19.8 506.8 L17.6 506.8 Z" fill="#bdbdbd"/>
</svg>
<svg width="719" height="560" viewBox="0 0 719 560" style="z-index:20">
<path d="M63 29 C67 32 72 36 76 38.6 C78.5 31 82 23 85.5 17" fill="none" stroke="#ee3034" stroke-width="5.4" stroke-linecap="round" stroke-linejoin="round"/>
<path d="M8 102.6 C13 105.5 20 109.5 25.8 111.6 C30 103.5 35 96.5 39.2 92.4" fill="none" stroke="#ee3034" stroke-width="5.2" stroke-linecap="round" stroke-linejoin="round"/>
<path d="M10 263.6 C12.5 266 15 268 17.6 269 C26 257.5 36 246 45.8 237.6" fill="none" stroke="#ee3034" stroke-width="4.2" stroke-linecap="round" stroke-linejoin="round"/>
<path d="M487 465.6 C490 469 494 471.4 499 471.2 C503 470.6 506 464 509 458 C514 449 520 437 529.3 421.8" fill="none" stroke="#f2302a" stroke-width="5.2" stroke-linecap="round" stroke-linejoin="round"/>
</svg>
</body>
</html>
